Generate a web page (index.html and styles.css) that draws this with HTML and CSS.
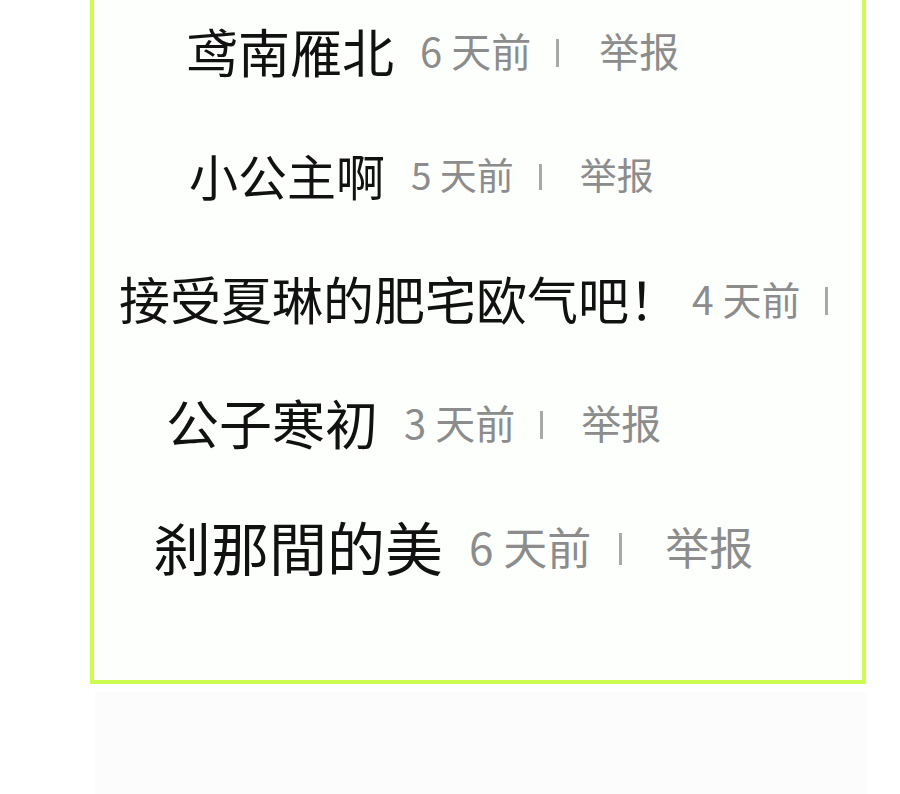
FILE: index.html
```html
<!DOCTYPE html>
<html lang="zh-CN">
<head>
    <meta charset="UTF-8">
    <meta name="viewport" content="width=device-width, initial-scale=1.0">
    <title>评论列表</title>
    <link rel="stylesheet" href="styles.css">
</head>
<body>
    <div class="comment-box">
        <div class="comment-row row-1">
            <span class="user">鸢南雁北</span>
            <span class="time">6 天前</span>
            <span class="sep"></span>
            <span class="report">举报</span>
        </div>
        <div class="comment-row row-2">
            <span class="user">小公主啊</span>
            <span class="time">5 天前</span>
            <span class="sep"></span>
            <span class="report">举报</span>
        </div>
        <div class="comment-row row-3">
            <span class="user">接受夏琳的肥宅欧气吧！</span>
            <span class="time">4 天前</span>
            <span class="sep"></span>
        </div>
        <div class="comment-row row-4">
            <span class="user">公子寒初</span>
            <span class="time">3 天前</span>
            <span class="sep"></span>
            <span class="report">举报</span>
        </div>
        <div class="comment-row row-5">
            <span class="user">刹那間的美</span>
            <span class="time">6 天前</span>
            <span class="sep"></span>
            <span class="report">举报</span>
        </div>
    </div>
    <div class="footer-area"></div>
</body>
</html>
```

FILE: styles.css
```css
:root {
    --frame-color: #cdfb4f;
    --name-color: #111;
    --meta-color: #8c8c8c;
    --sep-color: #a8a8a8;
}

body {
    margin: 0;
    background-color: #fff;
    font-family: "Noto Sans CJK SC", "Noto Sans", sans-serif;
    overflow: hidden;
}

/* 枠 (上辺は画面外) */
.comment-box {
    margin: -12px 0 0 90px;
    width: 768px;
    border: 4px solid var(--frame-color);
    border-top: none;
    background-color: #fdfffd;
    padding-bottom: 72px;
    overflow: hidden;
}

.comment-row {
    height: 124px;
    display: flex;
    align-items: center;
    white-space: nowrap;
    font-size: 40px;
}

.comment-row > span {
    flex-shrink: 0;
}

.user {
    color: var(--name-color);
    font-size: 52px;
    margin-right: 26px;
}

.time {
    color: var(--meta-color);
}

.sep {
    width: 3px;
    height: 0.72em;
    background-color: var(--sep-color);
    margin: 6px 38px 0 25px;
}

.report {
    color: var(--meta-color);
}

/* 行ごとの位置とサイズ */
.row-1 { padding-left: 92px; }
.row-1 .sep { margin-right: 40px; }
.row-2 { padding-left: 95px; font-size: 37px; }
.row-2 .user { font-size: 49px; }
.row-3 { padding-left: 25px; font-size: 39px; }
.row-3 .user { font-size: 51px; margin-right: 12px; }
.row-4 { padding-left: 72px; }
.row-4 .user { font-size: 53px; }
.row-5 { padding-left: 59px; font-size: 44px; }
.row-5 .user { font-size: 58px; }
.row-5 .sep { margin: 6px 43px 0 28px; }

.footer-area {
    margin: 8px 0 0 95px;
    width: 771px;
    height: 110px;
    background-color: #fcfcfc;
}
```
